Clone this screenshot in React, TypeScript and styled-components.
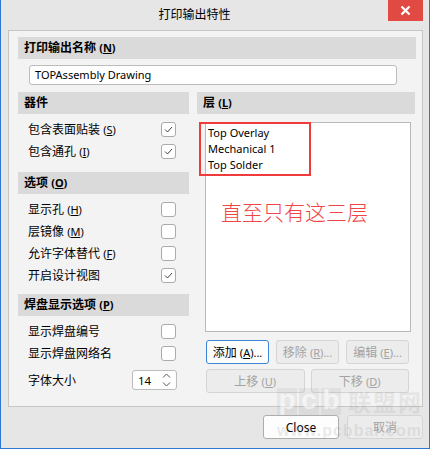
import React from "react";
import styled, { createGlobalStyle } from "styled-components";

const GlobalStyle = createGlobalStyle`
  html, body {
    margin: 0;
    padding: 0;
    background: #e6e6e6;
  }
  * {
    box-sizing: border-box;
  }
`;

const FONT = `"Noto Sans", "Noto Sans CJK SC", sans-serif`;

interface ICheckRow {
  label: string;
  hotkey?: string;
  checked: boolean;
}

const PARTS: ICheckRow[] = [
  { label: "包含表面贴装", hotkey: "S", checked: true },
  { label: "包含通孔", hotkey: "I", checked: true },
];

const OPTIONS: ICheckRow[] = [
  { label: "显示孔", hotkey: "H", checked: false },
  { label: "层镜像", hotkey: "M", checked: false },
  { label: "允许字体替代", hotkey: "F", checked: false },
  { label: "开启设计视图", checked: true },
];

const PADS: ICheckRow[] = [
  { label: "显示焊盘编号", checked: false },
  { label: "显示焊盘网络名", checked: false },
];

const LAYERS = ["Top Overlay", "Mechanical 1", "Top Solder"];

const Label = ({ text, hotkey, suffix }: { text: string; hotkey?: string; suffix?: string }) => (
  <>
    {text}
    {hotkey && (
      <>
        {" "}
        <Hot>
          (<u>{hotkey}</u>)
        </Hot>
      </>
    )}
    {suffix && <Hot>{suffix}</Hot>}
  </>
);

const CheckBox = ({ checked }: { checked: boolean }) => (
  <Box>
    {checked && (
      <svg width="13" height="13" viewBox="0 0 13 13">
        <polyline points="3,6.5 5.5,9 10,4" fill="none" stroke="#404040" strokeWidth="1" />
      </svg>
    )}
  </Box>
);

const Rows = ({ items }: { items: ICheckRow[] }) => (
  <>
    {items.map((item) => (
      <Row key={item.label}>
        <span>
          <Label text={item.label} hotkey={item.hotkey} />
        </span>
        <CheckBox checked={item.checked} />
      </Row>
    ))}
  </>
);

const App: React.FC = () => (
  <>
    <GlobalStyle />
    <Window>
      <TitleBar>
        <Title>打印输出特性</Title>
        <CloseX>
          <svg width="11" height="11" viewBox="0 0 11 11">
            <path d="M1.5 1.5 L9.5 9.5 M9.5 1.5 L1.5 9.5" stroke="#fff" strokeWidth="2.2" />
          </svg>
        </CloseX>
      </TitleBar>

      <Panel>
        <Header>
          <Label text="打印输出名称" hotkey="N" />
        </Header>
        <NameInput>TOPAssembly Drawing</NameInput>

        <Columns>
          <LeftCol>
            <Header>器件</Header>
            <Group>
              <Rows items={PARTS} />
            </Group>
            <Header $top={10}>
              <Label text="选项" hotkey="O" />
            </Header>
            <Group>
              <Rows items={OPTIONS} />
            </Group>
            <Header $top={8}>
              <Label text="焊盘显示选项" hotkey="P" />
            </Header>
            <Group>
              <Rows items={PADS} />
              <SizeRow>
                <span>字体大小</span>
                <Spin>
                  <span>14</span>
                  <svg width="9" height="14" viewBox="0 0 9 14">
                    <polyline points="1,4.5 4.5,1 8,4.5" fill="none" stroke="#555" strokeWidth="1" />
                    <polyline points="1,9.5 4.5,13 8,9.5" fill="none" stroke="#555" strokeWidth="1" />
                  </svg>
                </Spin>
              </SizeRow>
            </Group>
          </LeftCol>

          <RightCol>
            <Header>
              <Label text="层" hotkey="L" />
            </Header>
            <LayerList>
              {LAYERS.map((l) => (
                <LayerItem key={l}>{l}</LayerItem>
              ))}
              <Marker />
              <Note>直至只有这三层</Note>
            </LayerList>
            <ButtonGrid $cols={3} $gap={7}>
              <Btn $focus>
                <Label text="添加" hotkey="A" suffix="..." />
              </Btn>
              <Btn disabled>
                <Label text="移除" hotkey="R" suffix="..." />
              </Btn>
              <Btn disabled>
                <Label text="编辑" hotkey="E" suffix="..." />
              </Btn>
            </ButtonGrid>
            <ButtonGrid $cols={2} $gap={6} $top={5}>
              <Btn disabled>
                <Label text="上移" hotkey="U" />
              </Btn>
              <Btn disabled>
                <Label text="下移" hotkey="D" />
              </Btn>
            </ButtonGrid>
          </RightCol>
        </Columns>
      </Panel>

      <Footer>
        <FootBtn>Close</FootBtn>
        <FootBtn disabled>取消</FootBtn>
      </Footer>

      <Watermark aria-hidden>
        <WmTop>
          <WmBlock>p</WmBlock>
          <WmBlock>c</WmBlock>
          <WmBlock>b</WmBlock>
          <WmCn>联盟网</WmCn>
        </WmTop>
        <WmUrl>www.pcbbar.com</WmUrl>
      </Watermark>
    </Window>
  </>
);

const Window = styled.div`
  position: relative;
  width: 430px;
  height: 449px;
  background: #e6e6e6;
  border: 1px solid #2b79d1;
  border-top: none;
  font-family: ${FONT};
  font-size: 12px;
  color: #000;
  display: flex;
  flex-direction: column;
  overflow: hidden;
`;

const TitleBar = styled.div`
  height: 30px;
  display: flex;
  align-items: flex-start;
`;

const Title = styled.div`
  flex: 1;
  text-align: center;
  line-height: 30px;
  font-size: 12px;
`;

const CloseX = styled.div`
  width: 35px;
  height: 21px;
  margin-right: 6px;
  background: #e04a42;
  display: flex;
  align-items: center;
  justify-content: center;
`;

const Panel = styled.div`
  margin: 0 6px 0 7px;
  height: 377px;
  background: #f3f3f3;
  border: 1px solid #c6c6c6;
  padding: 6px 6px 0 9px;
`;

const Header = styled.div<{ $top?: number }>`
  height: 22px;
  margin-top: ${(p) => p.$top ?? 0}px;
  background: #dadada;
  padding-left: 6px;
  font-weight: bold;
  line-height: 22px;
  white-space: nowrap;
`;

const Hot = styled.span`
  font-size: 11px;
  u {
    text-decoration: underline;
  }
`;

const NameInput = styled.div`
  margin: 6px 19px 0 11px;
  height: 20px;
  background: #fff;
  border: 1px solid #bcbcbc;
  border-radius: 3px;
  padding-left: 5px;
  font-size: 11px;
  line-height: 18px;
`;

const Columns = styled.div`
  margin-top: 7px;
  display: grid;
  grid-template-columns: 171px 218px;
  column-gap: 8px;
`;

const LeftCol = styled.div`
  display: flex;
  flex-direction: column;
`;

const RightCol = styled.div`
  display: flex;
  flex-direction: column;
`;

const Group = styled.div`
  padding-top: 4px;
  display: flex;
  flex-direction: column;
`;

const Row = styled.div`
  height: 22px;
  display: flex;
  align-items: center;
  justify-content: space-between;
  padding: 0 13px 0 10px;
  white-space: nowrap;
`;

const SizeRow = styled(Row)`
  height: 28px;
  padding-right: 12px;
  margin-top: 2px;
`;

const Box = styled.div`
  width: 15px;
  height: 15px;
  background: #fff;
  border: 1px solid #ababab;
  border-radius: 3px;
  display: flex;
  align-items: center;
  justify-content: center;
`;

const Spin = styled.div`
  width: 45px;
  height: 20px;
  background: #fff;
  border: 1px solid #bcbcbc;
  border-radius: 3px;
  display: flex;
  align-items: center;
  justify-content: space-between;
  padding: 0 5px 0 5px;
  font-size: 11.5px;
`;

const LayerList = styled.div`
  position: relative;
  margin: 8px 4px 0 8px;
  height: 210px;
  background: #fff;
  border: 1px solid #b9b9b9;
  padding: 2px 0 0 2px;
`;

const LayerItem = styled.div`
  height: 16px;
  line-height: 16px;
  font-size: 11px;
`;

const Marker = styled.div`
  position: absolute;
  left: -7px;
  top: -1px;
  width: 112px;
  height: 54px;
  border: 2px solid #ef3b3b;
`;

const Note = styled.div`
  margin: 25px 0 0 13px;
  color: #f04545;
  font-family: "Noto Sans CJK SC", sans-serif;
  font-weight: 300;
  font-size: 21px;
  line-height: 26px;
`;

const ButtonGrid = styled.div<{ $cols: number; $gap: number; $top?: number }>`
  display: grid;
  grid-template-columns: repeat(${(p) => p.$cols}, 1fr);
  column-gap: ${(p) => p.$gap}px;
  margin: ${(p) => p.$top ?? 8}px 6px 0 9px;
`;

const Btn = styled.button<{ $focus?: boolean }>`
  height: 24px;
  padding: 0;
  font-family: ${FONT};
  font-size: 12px;
  white-space: nowrap;
  color: #000;
  background: #fdfdfd;
  border: 1px solid ${(p) => (p.$focus ? "#3b86d8" : "#adadad")};
  border-radius: 3px;

  &:disabled {
    color: #a3a3a3;
    background: #ececec;
    border-color: #d5d5d5;
  }
`;

const Footer = styled.div`
  display: flex;
  justify-content: flex-end;
  gap: 8px;
  margin: 8px 6px 0 0;
`;

const FootBtn = styled(Btn)`
  width: 76px;
  height: 24px;
`;

const Watermark = styled.div`
  position: absolute;
  left: 276px;
  top: 384px;
  pointer-events: none;
  font-family: "Liberation Sans", "Noto Sans CJK SC", sans-serif;
  font-weight: bold;
`;

const WmTop = styled.div`
  display: flex;
  align-items: center;
  gap: 2px;
`;

const WmBlock = styled.span`
  width: 20px;
  height: 27px;
  background: rgba(160, 160, 160, 0.16);
  color: rgba(255, 255, 255, 0.6);
  font-size: 28px;
  line-height: 24px;
  text-align: center;
`;

const WmCn = styled.span`
  margin-left: 5px;
  font-size: 23px;
  letter-spacing: 2px;
  color: rgba(150, 150, 150, 0.18);
  font-family: "Noto Sans CJK SC", sans-serif;
`;

const WmUrl = styled.div`
  margin-top: 4px;
  font-size: 16px;
  letter-spacing: 1px;
  color: rgba(150, 150, 150, 0.2);
`;

export default App;
